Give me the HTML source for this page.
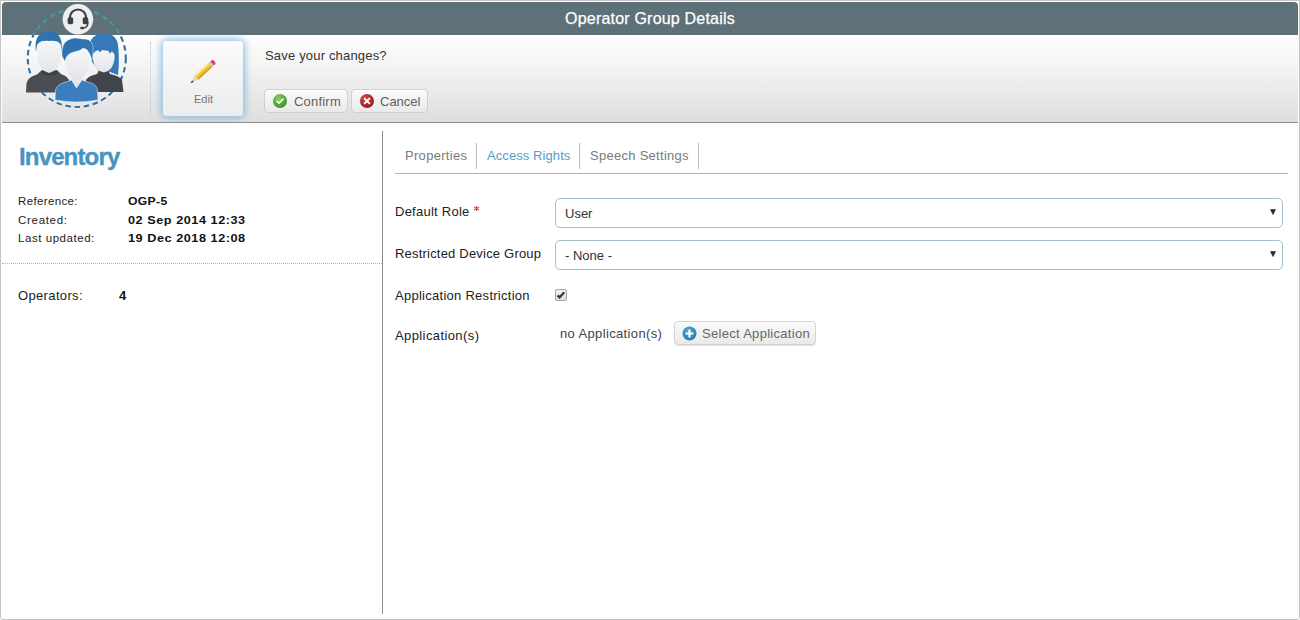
<!DOCTYPE html>
<html><head><meta charset="utf-8">
<style>
*{box-sizing:border-box;margin:0;padding:0}
html,body{width:1300px;height:620px;overflow:hidden;background:#fff;font-family:"Liberation Sans",sans-serif}
#frame{position:absolute;left:0;top:0;width:1300px;height:620px;border:1px solid #c4c4c4;border-radius:0 0 3px 3px;background:#fff}
#hdr{position:absolute;left:2px;top:2px;width:1296px;height:33px;background:#5e7078;border-radius:4px 4px 0 0;color:#fff;font-size:16px;letter-spacing:.2px;-webkit-text-stroke:.25px #fff;text-align:center;line-height:33px}
#tb{position:absolute;left:2px;top:35px;width:1296px;height:88px;background:linear-gradient(#fefefe,#f3f3f3 40%,#dedede);border-bottom:1px solid #8e8e8e}
.abs{position:absolute;white-space:nowrap}
#dots{position:absolute;left:150px;top:42px;width:1px;height:74px;border-left:1px dotted #c4c4c4}
#edit{position:absolute;left:163px;top:41px;width:80px;height:75px;border-radius:4px;background:linear-gradient(#fbfbfb,#ececec);box-shadow:0 0 7px 2px rgba(100,170,215,.7)}
.btn{position:absolute;height:24px;border:1px solid #cfcfcf;border-radius:4px;background:linear-gradient(#fbfbfb,#e9e9e9);box-shadow:inset 0 1px 0 #fff;color:#606060;font-size:13px}
#vline{position:absolute;left:382px;top:131px;width:1px;height:483px;background:#8c8c8c}
#hdots{position:absolute;left:2px;top:263px;width:380px;height:1px;border-top:1px dotted #b0b0b0}
.lbl{font-size:11.5px;color:#222}
.val{font-size:11.5px;color:#111;font-weight:bold;transform-origin:0 0}
.tab{font-size:13px;color:#7a7a7a}
.tsep{position:absolute;top:143px;width:1px;height:26px;background:#bdbdbd}
#tline{position:absolute;left:395px;top:173px;width:893px;height:1px;background:#b4b4b4}
.flbl{font-size:13px;color:#222}
.sel{position:absolute;left:555px;width:728px;height:30px;border:1px solid #a3bfca;border-radius:5px;background:#fff;font-size:14px;color:#333}
</style></head><body>
<div id="frame"></div>
<div id="hdr">Operator Group Details</div>
<div id="tb"></div>
<svg class="abs" style="left:0;top:0" width="140" height="122" viewBox="0 0 140 122">
<defs>
<linearGradient id="fg" x1="0" y1="0" x2="0" y2="1"><stop offset="0" stop-color="#f6f7f8"/><stop offset="1" stop-color="#e2e5e8"/></linearGradient>
<linearGradient id="hb" x1="0" y1="0" x2="1" y2="1"><stop offset="0" stop-color="#2a70ae"/><stop offset="1" stop-color="#3379b8"/></linearGradient>
<clipPath id="ctop"><rect x="0" y="0" width="140" height="35"/></clipPath>
<clipPath id="cbot"><rect x="0" y="35" width="140" height="90"/></clipPath>
</defs>
<g clip-path="url(#ctop)"><circle cx="76.8" cy="58" r="49" fill="none" stroke="#4c949e" stroke-width="2.2" stroke-dasharray="5.5 3.7"/></g>
<g clip-path="url(#cbot)">
<circle cx="76.8" cy="58" r="49" fill="none" stroke="#fff" stroke-opacity=".6" stroke-width="4.6" stroke-dasharray="5.5 3.7"/>
<circle cx="76.8" cy="58" r="49" fill="none" stroke="#3574a6" stroke-width="2.2" stroke-dasharray="5.5 3.7"/>
</g>
<!-- left person -->
<path d="M26,92.5 L26.5,83 Q28,77 37,74.5 L41.5,70.5 L57.5,70.5 L61,74 Q67,76 69,80 L69,92.5 Z" fill="#4a4e53"/>
<path d="M41.5,70.5 L57.5,70.5 L57,74 Q49,77 42,74 Z" fill="#3c4045"/>
<path d="M36,52 Q33,32 49,31.5 Q64,32 61.5,52 L61,45 Q57,40 49,41 Q41,40 37,45 Z" fill="#2f72b0"/>
<path d="M37.5,48 Q37,42 43,41 Q49,42.5 55,41 Q61,42 61,48 L61,57 Q60,70 49,73 Q38,70 37.5,57 Z" fill="url(#fg)"/>
<!-- right person -->
<path d="M92,62 Q88.5,46 91,40 Q96,33 104,33 Q114,33 117.5,42 Q120,56 118,75 L110,72 L98,70 Z" fill="#3679b8"/>
<path d="M85.5,92 L86,80 Q88,76 97,74 L99,70 L108,70 L110,74 Q120,76 122,80 L123.5,92 Z" fill="#41454a"/>
<path d="M93,54 Q95,51 98,50 L100,52.5 L102,50 Q106,50.5 108.5,51 L110,54 L111.5,51.5 Q114,52 114.5,55 L114.5,59 Q113,71 104,72.5 Q94,71 92.9,59 Z" fill="url(#fg)"/>
<!-- center person -->
<path d="M65.5,60 Q65.5,50 77,49 Q88,48 89.5,56 L89.5,62 Q88,77 77,80 Q66,77 65.5,62 Z" fill="url(#fg)"/>
<path d="M62,56 Q61,44 68,40 Q74,36.5 82,39 Q85,38.5 89,40 Q94,43 93,52 L92,60.5 Q90.5,55 88.5,52 Q86.5,48.3 83,48.3 Q80,51 74,52 Q68,53.5 66.2,57.5 L64.8,61.5 Z" fill="url(#hb)" stroke="#fff" stroke-width="0.7" stroke-opacity=".6"/>
<path d="M71.5,77 L82,77 L82,84 L76.5,88 L71.5,84 Z" fill="#e4e6e8"/>
<path d="M55,100 L55.5,90 Q57,84 66,82 L71.5,80 L76.5,88 L82,80 L88,82 Q97,84 97.5,90 L98,100 Q77,104 55,100 Z" fill="#3b7dbd" stroke="#fff" stroke-width=".8" stroke-opacity=".6"/>
<!-- headset -->
<circle cx="77.9" cy="19.2" r="15.3" fill="#efefef"/>
<path d="M70,19.5 L70,17.5 A8,8 0 0 1 86,17.5 L86,19.5" fill="none" stroke="#3b4249" stroke-width="2.2"/>
<rect x="67.6" y="17.3" width="5.6" height="7" rx="1.8" fill="#3b4249"/>
<rect x="82.7" y="17.3" width="5.6" height="7" rx="1.8" fill="#3b4249"/>
<path d="M88,22 Q88,28 83,28" fill="none" stroke="#3b4249" stroke-width="1.4"/>
<rect x="80.2" y="26.8" width="3.8" height="2.5" rx="1.1" fill="#3b4249"/>
</svg>
<div id="dots"></div>
<div id="edit"></div>
<svg class="abs" style="left:183px;top:53px" width="40" height="38" viewBox="183 53 40 38">
<g transform="rotate(-42.5 202.8 72)">
<path d="M190.5,72 L194.5,69.3 L213,69.3 L213,74.7 L194.5,74.7 Z" fill="#f1c232"/>
<path d="M194.5,69.3 L213,69.3 L213,70.9 L194.5,70.9 Z" fill="#fbe38a"/>
<path d="M194.5,73.2 L213,73.2 L213,74.7 L194.5,74.7 Z" fill="#cf9a1e"/>
<path d="M187,72 L194.5,69.3 L194.5,74.7 Z" fill="#ecd5a6"/>
<path d="M186.2,72 L189.4,70.8 L189.4,73.2 Z" fill="#3a3a3a"/>
<rect x="213" y="69.3" width="2.4" height="5.4" fill="#c4c4c4"/>
<path d="M215.4,69.3 L217.2,69.3 Q218.8,69.3 218.8,72 Q218.8,74.7 217.2,74.7 L215.4,74.7 Z" fill="#e04858"/>
</g>
</svg>
<div class="abs" style="left:194px;top:93px;font-size:11px;color:#777">Edit</div>
<div class="abs" style="left:265px;top:48px;font-size:13px;color:#333;letter-spacing:.18px">Save your changes?</div>
<div class="btn" style="left:264px;top:89px;width:84px"><span class="abs" style="left:29px;top:4px;letter-spacing:.2px">Confirm</span></div>
<div class="btn" style="left:351px;top:89px;width:77px"><span class="abs" style="left:28px;top:4px">Cancel</span></div>
<svg class="abs" style="left:272px;top:93px" width="16" height="16" viewBox="0 0 16 16">
<defs><radialGradient id="gg" cx=".4" cy=".3" r=".8"><stop offset="0" stop-color="#86d060"/><stop offset="1" stop-color="#2f8a22"/></radialGradient>
<radialGradient id="rg" cx=".4" cy=".3" r=".8"><stop offset="0" stop-color="#d84848"/><stop offset="1" stop-color="#941414"/></radialGradient></defs>
<circle cx="8" cy="8" r="7" fill="url(#gg)"/>
<path d="M5,8.2 L7,10.1 L11,6.1" fill="none" stroke="#fff" stroke-width="1.6" stroke-linecap="round" stroke-linejoin="round"/>
</svg>
<svg class="abs" style="left:359px;top:93px" width="16" height="16" viewBox="0 0 16 16">
<circle cx="8" cy="8" r="7" fill="url(#rg)"/>
<path d="M5.6,5.6 L10.4,10.4 M10.4,5.6 L5.6,10.4" stroke="#fff" stroke-width="1.9" stroke-linecap="round"/>
</svg>

<div class="abs" style="left:19px;top:143px;font-size:24px;font-weight:bold;color:#4794be;letter-spacing:-.85px;-webkit-text-stroke:.35px #4794be">Inventory</div>
<div class="abs lbl" style="left:18px;top:195px;letter-spacing:.36px">Reference:</div>
<div class="abs val" style="left:128px;top:195px;letter-spacing:.3px;transform:scaleX(1.06)">OGP-5</div>
<div class="abs lbl" style="left:18px;top:214px;letter-spacing:.7px">Created:</div>
<div class="abs val" style="left:128px;top:214px;letter-spacing:.5px;transform:scaleX(1.1)">02 Sep 2014 12:33</div>
<div class="abs lbl" style="left:18px;top:232px;letter-spacing:.55px">Last updated:</div>
<div class="abs val" style="left:128px;top:232px;letter-spacing:.5px;transform:scaleX(1.1)">19 Dec 2018 12:08</div>
<div id="hdots"></div>
<div class="abs lbl" style="left:18px;top:288px;font-size:13px;letter-spacing:.35px">Operators:</div>
<div class="abs val" style="left:119px;top:288px;font-size:13px">4</div>
<div id="vline"></div>

<div class="abs tab" style="left:405px;top:148px;letter-spacing:.3px">Properties</div>
<div class="tsep" style="left:476px"></div>
<div class="abs tab" style="left:487px;top:148px;color:#5a9ec6;letter-spacing:.08px">Access Rights</div>
<div class="tsep" style="left:579px"></div>
<div class="abs tab" style="left:590px;top:148px;letter-spacing:.28px">Speech Settings</div>
<div class="tsep" style="left:698px"></div>
<div id="tline"></div>

<div class="abs flbl" style="left:395px;top:204px;letter-spacing:.25px">Default Role</div><svg class="abs" style="left:472px;top:204px" width="10" height="10" viewBox="0 0 10 10"><path d="M4.5,2 L4.5,7 M2,3.2 L7,5.8 M7,3.2 L2,5.8" stroke="#d83848" stroke-width="1.1"/></svg>
<div class="sel" style="top:198px"></div>
<div class="abs flbl" style="left:395px;top:246px;letter-spacing:.2px">Restricted Device Group</div>
<div class="sel" style="top:240px"></div>
<div class="abs flbl" style="left:395px;top:288px;letter-spacing:.27px">Application Restriction</div>
<div class="abs flbl" style="left:395px;top:328px;letter-spacing:.4px">Application(s)</div>
<div class="abs" style="left:565px;top:206px;font-size:13px;color:#333">User</div>
<div class="abs" style="left:1268px;top:206px;font-size:10px;color:#2a2a2a">&#9660;</div>
<div class="abs" style="left:565px;top:248px;font-size:13px;color:#333">- None -</div>
<div class="abs" style="left:1268px;top:248px;font-size:10px;color:#2a2a2a">&#9660;</div>
<div class="abs" style="left:555px;top:289px;width:12px;height:12px;border:1px solid #a6a6a6;border-radius:2px;background:linear-gradient(#f2f2f2,#e0e0e0)"></div>
<svg class="abs" style="left:555px;top:289px" width="12" height="12" viewBox="0 0 12 12"><path d="M2.6,6.4 L4.6,8.4 L9.2,3.3" fill="none" stroke="#363636" stroke-width="2.3" stroke-linejoin="miter"/></svg>
<div class="abs" style="left:560px;top:326px;font-size:13px;color:#444;letter-spacing:.36px">no Application(s)</div>
<div class="btn" style="left:674px;top:321px;width:142px;height:24px;border-color:#d4d4d4;box-shadow:0 1px 1px rgba(0,0,0,.12),inset 0 1px 0 #fff"><span class="abs" style="left:27px;top:4px;color:#666;letter-spacing:.3px">Select Application</span></div>
<svg class="abs" style="left:681.5px;top:325.5px" width="15" height="15" viewBox="0 0 15 15">
<defs><radialGradient id="bg2" cx=".4" cy=".3" r=".8"><stop offset="0" stop-color="#4aa8d8"/><stop offset="1" stop-color="#1f78a8"/></radialGradient></defs>
<circle cx="7.5" cy="7.5" r="7" fill="url(#bg2)"/>
<path d="M7.5,3.6 L7.5,11.4 M3.6,7.5 L11.4,7.5" stroke="#fff" stroke-width="2.2"/>
</svg>
</body></html>
